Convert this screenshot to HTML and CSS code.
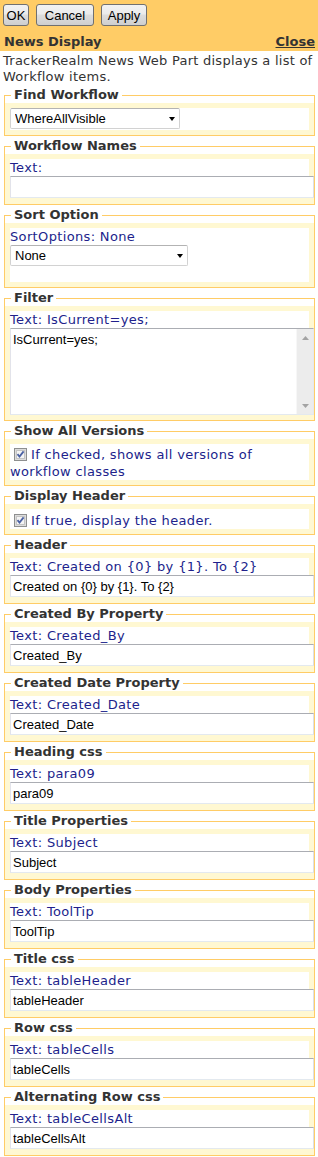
FILE: index.html
```html
<!DOCTYPE html>
<html lang="en">
<head>
    <meta charset="UTF-8">
    <title>News Display</title>
    <link rel="stylesheet" href="styles.css">
</head>
<body>
<div class="wp-toolbar">
    <div class="wp-buttons">
        <button class="wp-btn wp-btn--ok">OK</button>
        <button class="wp-btn wp-btn--cancel">Cancel</button>
        <button class="wp-btn wp-btn--apply">Apply</button>
    </div>
    <div class="wp-title-row">
        <span class="wp-title">News Display</span>
        <a class="wp-close" href="#">Close</a>
    </div>
</div>
<p class="wp-desc">TrackerRealm News Web Part displays a list of Workflow items.</p>

<fieldset class="wp-prop">
    <legend>Find Workflow</legend>
    <div class="wp-pane"><div class="wp-box">
        <div class="wp-select wp-select--find"><select><option>WhereAllVisible</option></select></div>
    </div></div>
</fieldset>

<fieldset class="wp-prop">
    <legend>Workflow Names</legend>
    <div class="wp-pane"><div class="wp-box">
        <div class="wp-label">Text:</div>
        <input class="wp-input" type="text" value="">
    </div></div>
</fieldset>

<fieldset class="wp-prop">
    <legend>Sort Option</legend>
    <div class="wp-pane"><div class="wp-box">
        <div class="wp-label">SortOptions: None</div>
        <div class="wp-select wp-select--sort"><select><option>None</option></select></div>
        <div class="wp-spacer"></div>
    </div></div>
</fieldset>

<fieldset class="wp-prop">
    <legend>Filter</legend>
    <div class="wp-pane"><div class="wp-box">
        <div class="wp-label">Text: IsCurrent=yes;</div>
        <div class="wp-memo">
            <textarea>IsCurrent=yes;</textarea>
            <div class="wp-vscroll">
                <svg width="7" height="4" viewBox="0 0 7 4"><path d="M0 4L3.5 0L7 4Z" fill="#a3a3a3"/></svg>
                <svg width="7" height="4" viewBox="0 0 7 4"><path d="M0 0L7 0L3.5 4Z" fill="#a3a3a3"/></svg>
            </div>
        </div>
    </div></div>
</fieldset>

<fieldset class="wp-prop">
    <legend>Show All Versions</legend>
    <div class="wp-pane"><div class="wp-box">
        <div class="wp-check"><svg class="wp-checkbox" width="13" height="13" viewBox="0 0 13 13"><rect x="0.5" y="0.5" width="12" height="12" fill="#dcdcdc" stroke="#8e8f8f"/><rect x="2.5" y="2.5" width="8" height="8" fill="#f4f4f4" stroke="#c4c4c4"/><path d="M3.5 6.2L5.5 8.5L9.6 3.4" fill="none" stroke="#4b61a3" stroke-width="1.8"/></svg>If checked, shows all versions of workflow classes</div>
    </div></div>
</fieldset>

<fieldset class="wp-prop">
    <legend>Display Header</legend>
    <div class="wp-pane"><div class="wp-box">
        <div class="wp-check wp-check--single"><svg class="wp-checkbox" width="13" height="13" viewBox="0 0 13 13"><rect x="0.5" y="0.5" width="12" height="12" fill="#dcdcdc" stroke="#8e8f8f"/><rect x="2.5" y="2.5" width="8" height="8" fill="#f4f4f4" stroke="#c4c4c4"/><path d="M3.5 6.2L5.5 8.5L9.6 3.4" fill="none" stroke="#4b61a3" stroke-width="1.8"/></svg>If true, display the header.</div>
    </div></div>
</fieldset>

<fieldset class="wp-prop">
    <legend>Header</legend>
    <div class="wp-pane"><div class="wp-box">
        <div class="wp-label">Text: Created on {0} by {1}. To {2}</div>
        <input class="wp-input" type="text" value="Created on {0} by {1}. To {2}">
    </div></div>
</fieldset>

<fieldset class="wp-prop">
    <legend>Created By Property</legend>
    <div class="wp-pane"><div class="wp-box">
        <div class="wp-label">Text: Created_By</div>
        <input class="wp-input" type="text" value="Created_By">
    </div></div>
</fieldset>

<fieldset class="wp-prop">
    <legend>Created Date Property</legend>
    <div class="wp-pane"><div class="wp-box">
        <div class="wp-label">Text: Created_Date</div>
        <input class="wp-input" type="text" value="Created_Date">
    </div></div>
</fieldset>

<fieldset class="wp-prop">
    <legend>Heading css</legend>
    <div class="wp-pane"><div class="wp-box">
        <div class="wp-label">Text: para09</div>
        <input class="wp-input" type="text" value="para09">
    </div></div>
</fieldset>

<fieldset class="wp-prop">
    <legend>Title Properties</legend>
    <div class="wp-pane"><div class="wp-box">
        <div class="wp-label">Text: Subject</div>
        <input class="wp-input" type="text" value="Subject">
    </div></div>
</fieldset>

<fieldset class="wp-prop">
    <legend>Body Properties</legend>
    <div class="wp-pane"><div class="wp-box">
        <div class="wp-label">Text: ToolTip</div>
        <input class="wp-input" type="text" value="ToolTip">
    </div></div>
</fieldset>

<fieldset class="wp-prop">
    <legend>Title css</legend>
    <div class="wp-pane"><div class="wp-box">
        <div class="wp-label">Text: tableHeader</div>
        <input class="wp-input" type="text" value="tableHeader">
    </div></div>
</fieldset>

<fieldset class="wp-prop">
    <legend>Row css</legend>
    <div class="wp-pane"><div class="wp-box">
        <div class="wp-label">Text: tableCells</div>
        <input class="wp-input" type="text" value="tableCells">
    </div></div>
</fieldset>

<fieldset class="wp-prop">
    <legend>Alternating Row css</legend>
    <div class="wp-pane"><div class="wp-box">
        <div class="wp-label">Text: tableCellsAlt</div>
        <input class="wp-input" type="text" value="tableCellsAlt">
    </div></div>
</fieldset>
</body>
</html>
```

FILE: styles.css
```css
body {
    margin: 0;
    background: #fff;
    font-family: "DejaVu Sans", Verdana, sans-serif;
    font-size: 13px;
    color: #333;
}
.wp-toolbar {
    background: #ffcc66;
    padding: 4px 3px 1px 3px;
}
.wp-buttons {
    display: flex;
    gap: 7px;
}
.wp-btn {
    height: 22px;
    padding: 0;
    border: 1px solid #707070;
    border-radius: 3px;
    background: linear-gradient(#f2f2f2 0%, #ebebeb 45%, #dddddd 50%, #cfcfcf 100%);
    font-family: "Liberation Sans", Arial, sans-serif;
    font-size: 13px;
    color: #000;
}
.wp-btn--ok {
    width: 26px;
}
.wp-btn--cancel {
    width: 58px;
}
.wp-btn--apply {
    width: 46px;
}
.wp-title-row {
    display: flex;
    justify-content: space-between;
    margin-top: 8px;
    padding-left: 1px;
    line-height: 16px;
    font-weight: bold;
}
.wp-title {
    color: #333;
}
.wp-close {
    color: #333;
    text-decoration: underline;
}
.wp-desc {
    margin: 2px 0;
    padding-left: 3px;
    line-height: 16px;
    letter-spacing: 0.25px;
    color: #333;
}
.wp-prop {
    margin: 2px 3px 2px 4px;
    padding: 0;
    border: 1px solid #ffcc66;
    min-width: 0;
}
.wp-prop legend {
    margin-left: 6px;
    padding: 0 3px;
    line-height: 16px;
    font-weight: bold;
    color: #333;
}
.wp-pane {
    background: #fff8d2;
    padding: 5px;
}
.wp-box {
    background: #fff;
}
.wp-label {
    line-height: 17px;
    letter-spacing: 0.35px;
    color: #211f8c;
}
.wp-input {
    display: block;
    box-sizing: border-box;
    width: 304px;
    height: 22px;
    margin: 0 0 1px;
    padding: 0 2px;
    border: 1px solid #e3e9ef;
    border-top-color: #abadb3;
    border-left-color: #e2e3ea;
    border-right-color: #dbdfe6;
    background: #fff;
    font-family: "Liberation Sans", Arial, sans-serif;
    font-size: 13px;
    color: #000;
}
.wp-select {
    position: relative;
    display: block;
    padding-bottom: 1px;
}
.wp-select select {
    display: block;
    box-sizing: border-box;
    height: 21px;
    margin: 0;
    padding: 0 4px;
    border: 1px solid #d2d2d2;
    border-top-color: #b3b3b3;
    border-radius: 2px;
    background: #fff;
    appearance: none;
    -webkit-appearance: none;
    font-family: "Liberation Sans", Arial, sans-serif;
    font-size: 13px;
    color: #000;
}
.wp-select--find select {
    width: 170px;
}
.wp-select--sort select {
    width: 178px;
}
.wp-select::after {
    content: "";
    position: absolute;
    top: 9px;
    border-left: 3.5px solid transparent;
    border-right: 3.5px solid transparent;
    border-top: 4px solid #000;
}
.wp-select--find::after {
    left: 159px;
}
.wp-select--sort::after {
    left: 167px;
}
.wp-spacer {
    height: 15px;
}
.wp-memo {
    display: flex;
    box-sizing: border-box;
    width: 304px;
    height: 87px;
    border: 1px solid #e3e9ef;
    border-top-color: #abadb3;
    border-left-color: #e2e3ea;
}
.wp-memo textarea {
    flex: 1;
    margin: 0;
    padding: 3px 2px;
    border: 0;
    resize: none;
    outline: none;
    font-family: "Liberation Sans", Arial, sans-serif;
    font-size: 13px;
    line-height: 15px;
    color: #000;
}
.wp-vscroll {
    display: flex;
    flex-direction: column;
    justify-content: space-between;
    align-items: center;
    width: 16px;
    padding: 7px 0 6px;
    border-left: 1px solid #f7f7f7;
    background: #ececec;
}
.wp-check {
    padding-top: 2px;
    line-height: 17px;
    letter-spacing: 0.35px;
    color: #211f8c;
}
.wp-check--single {
    padding-top: 3px;
}
.wp-checkbox {
    margin: 0 4px 0 4px;
    vertical-align: -2px;
}
```
